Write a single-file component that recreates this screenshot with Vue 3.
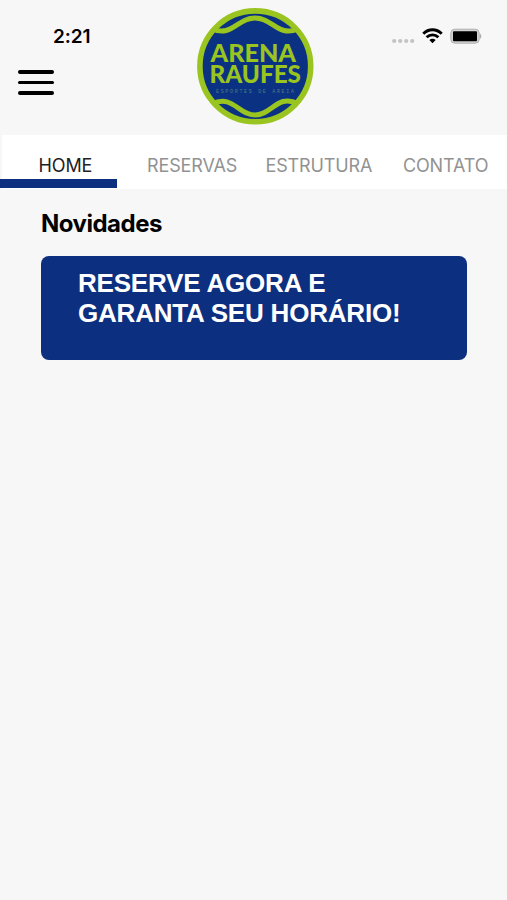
<template>
  <div class="screen">
    <header class="header">
      <div class="header-left">
        <span class="clock">2:21</span>
        <button class="menu" aria-label="Menu">
          <span class="menu-line"></span>
          <span class="menu-line"></span>
          <span class="menu-line"></span>
        </button>
      </div>

      <svg class="logo" viewBox="0 0 130 130" width="130" height="130">
        <circle cx="65.3" cy="66.3" r="55.4" fill="#0b3282" stroke="#9ac420" stroke-width="5.6" />
        <g fill="none" stroke="#9ac420" stroke-width="5">
          <path d="M22 29 C27 31 32 31.500 36 30.500 C46 28 52 18 65 18 C78 18 84 28 94 30.500 C98 31.500 103 31 108 29" />
          <path d="M22 104 C27 101.500 32 100.500 37 101.800 C47 104.500 53 115 65 115 C77 115 83 104.500 93 101.500 C98 100.300 103 101 108 104" />
        </g>
        <g class="logo-name" fill="#9ac420">
          <text x="20.500" y="61.800" textLength="85.500" lengthAdjust="spacingAndGlyphs">ARENA</text>
          <text x="19.500" y="83.300" textLength="91.500" lengthAdjust="spacingAndGlyphs">RAUFES</text>
        </g>
        <text class="logo-tag" x="26" y="93" textLength="78">ESPORTES DE AREIA</text>
      </svg>

      <div class="status">
        <svg width="92" height="20" viewBox="0 0 92 20">
          <g fill="#c3c3c3">
            <circle cx="4.200" cy="15" r="2.100" />
            <circle cx="10.200" cy="15" r="2.100" />
            <circle cx="16.200" cy="15" r="2.100" />
            <circle cx="22.200" cy="15" r="2.100" />
          </g>
          <g fill="none" stroke="#000" stroke-width="2.900">
            <path d="M33.300 7.700 C38.500 2.400 46.500 2.400 51.700 7.700" />
            <path d="M36.600 11.300 C40 8 45 8 48.400 11.300" />
          </g>
          <path d="M42.500 17.300 L39.300 14 Q42.500 11.300 45.700 14 Z" />
          <rect x="60.800" y="3.200" width="28.400" height="14" rx="4" fill="#d2d2d2" stroke="#b0b0b0" />
          <rect x="63" y="5.200" width="24" height="10" rx="1" />
          <path d="M90 7.500 Q92.500 10.200 90 13 Z" fill="#ababab" />
        </svg>
      </div>
    </header>

    <nav class="tabs">
      <button
        v-for="tab in tabs"
        :key="tab"
        class="tab"
        :class="{ active: tab === current }"
        @click="current = tab"
      >
        {{ tab }}
      </button>
    </nav>

    <main class="content">
      <h2 class="title">Novidades</h2>
      <section class="banner">
        <span>RESERVE AGORA E</span>
        <span>GARANTA SEU HORÁRIO!</span>
      </section>
    </main>
  </div>
</template>

<script setup>
import { ref } from 'vue'

const tabs = ['HOME', 'RESERVAS', 'ESTRUTURA', 'CONTATO']
const current = ref('HOME')
</script>

<style>
body {
  background: #f7f7f7;
}
</style>

<style scoped>
.screen {
  min-height: 900px;
  overflow: hidden;
  background: #f7f7f7;
  color: #000;
  font-family: Inter, 'Liberation Sans', sans-serif;
}

.header {
  display: grid;
  grid-template-columns: 190px 130px 1fr;
  height: 135px;
}

.header-left {
  display: flex;
  flex-direction: column;
  align-items: flex-start;
}

.clock {
  margin: 25px 0 0 53px;
  font-size: 19px;
  font-weight: 600;
  line-height: 24px;
  letter-spacing: -0.1px;
}

.menu {
  display: flex;
  flex-direction: column;
  gap: 7px;
  margin: 21px 0 0 17.5px;
  padding: 0;
  border: 0;
  background: none;
}

.menu-line {
  width: 36px;
  height: 3.7px;
  border-radius: 2px;
  background: #000;
}

.logo {
  display: block;
}

.logo-name {
  font-family: Lato, sans-serif;
  font-size: 25px;
  font-weight: 900;
}

.logo-tag {
  fill: #4b7b83;
  font-family: 'Liberation Mono', monospace;
  font-size: 5px;
}

.status {
  padding: 26px 0 0 70px;
}

.status svg {
  display: block;
}

.tabs {
  display: flex;
  height: 54px;
  margin: 0 -2px 0 2px;
  background: #fff;
}

.tab {
  position: relative;
  flex: 1 1 0;
  padding: 7px 0 0;
  border: 0;
  background: none;
  color: #929292;
  font-family: inherit;
  font-size: 18px;
  letter-spacing: -0.13px;
}

.tab.active {
  color: #222;
}

.tab.active::after {
  content: '';
  position: absolute;
  left: -2px;
  bottom: 1px;
  width: 116.5px;
  height: 9px;
  background: #0d2f80;
}

.content {
  padding: 19px 40px 0 41px;
}

.title {
  margin: 0;
  font-size: 24px;
  font-weight: 700;
  line-height: 32px;
  letter-spacing: -0.5px;
}

.banner {
  display: flex;
  flex-direction: column;
  align-items: flex-start;
  box-sizing: border-box;
  height: 104px;
  margin-top: 16px;
  padding: 12px 37px;
  border-radius: 8px;
  background: #0d2f80;
  color: #fff;
  font-family: 'Liberation Sans', sans-serif;
  font-size: 26px;
  font-weight: 700;
  line-height: 30px;
  letter-spacing: -0.2px;
  white-space: nowrap;
}
</style>
